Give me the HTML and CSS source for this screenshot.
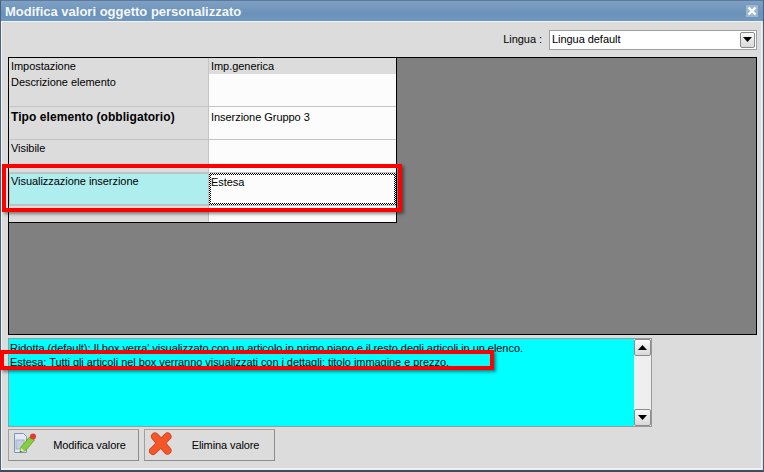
FILE: index.html
```html
<!DOCTYPE html>
<html lang="it">
<head>
<meta charset="utf-8">
<title>Modifica valori oggetto personalizzato</title>
<link rel="stylesheet" href="styles.css">
</head>
<body>
<div class="window">
  <header class="titlebar">
    <span class="title">Modifica valori oggetto personalizzato</span>
    <span class="close"><svg width="10" height="10" viewBox="0 0 10 10"><path d="M1.500 1.500l7 7M8.500 1.500l-7 7" stroke="#fff" stroke-width="2.400" fill="none"/></svg></span>
  </header>
  <main class="content">
    <div class="langbar">
      <span class="langlabel">Lingua :</span>
      <div class="select">
        <span>Lingua default</span>
        <span class="selbtn"><svg width="9" height="5" viewBox="0 0 9 5"><path d="M0 0h9L4.500 5z" fill="#000"/></svg></span>
      </div>
    </div>
    <section class="gridarea">
      <div class="table">
        <div class="row head"><div class="c1">Impostazione</div><div class="c2">Imp.generica</div></div>
        <div class="row r"><div class="c1">Descrizione elemento</div><div class="c2"></div></div>
        <div class="row r"><div class="c1 strong">Tipo elemento (obbligatorio)</div><div class="c2">Inserzione Gruppo 3</div></div>
        <div class="row r"><div class="c1">Visibile</div><div class="c2"></div></div>
        <div class="row r sel"><div class="c1">Visualizzazione inserzione</div><div class="c2">Estesa</div></div>
        <div class="row last"><div class="c1"></div><div class="c2"></div></div>
      </div>
    </section>
    <section class="info">
      <div class="infotext">
        <p>Ridotta (default): Il box verra' visualizzato con un articolo in primo piano e il resto degli articoli in un elenco.</p>
        <p>Estesa: Tutti gli articoli nel box verranno visualizzati con i dettagli: titolo immagine e prezzo.</p>
      </div>
      <div class="scroll">
        <span class="sbtn"><svg width="9" height="5" viewBox="0 0 9 5"><path d="M0 5h9L4.500 0z" fill="#000"/></svg></span>
        <span class="strack"></span>
        <span class="sbtn"><svg width="9" height="5" viewBox="0 0 9 5"><path d="M0 0h9L4.500 5z" fill="#000"/></svg></span>
      </div>
    </section>
    <div class="buttons">
      <button class="btn"><span class="ic">
        <svg width="24" height="26" viewBox="0 0 24 26">
          <path d="M1.500 1.500h9l3 3v16h-12z" fill="#e4eaf4" stroke="#8094b8"/>
          <rect x="3" y="8" width="8" height="9" fill="#c4cfe0" stroke="#9fb0c8"/>
          <path d="M7 20.500l1-5.500L17 4.500l4.500 3.500L12.500 18.500z" fill="#86cf3e" stroke="#5a9a28" stroke-width=".8"/>
          <path d="M7 20.500l1-4.500 3.500 3z" fill="#f0e4c0"/>
          <path d="M7 20.500l.5-2 1.500 1.300z" fill="#3a5a20"/>
          <circle cx="20" cy="4.500" r="3" fill="#e23a34"/>
        </svg></span><span class="lbl">Modifica valore</span></button>
      <button class="btn"><span class="ic">
        <svg width="24" height="26" viewBox="0 0 24 26">
          <path d="M6 4.500L18.500 18.500M18.500 4.500L4 19" stroke="#c8411c" stroke-width="8" stroke-linecap="round" fill="none"/>
          <path d="M6 4.500L18.500 18.500M18.500 4.500L4 19" stroke="#f4562a" stroke-width="6.500" stroke-linecap="round" fill="none"/>
        </svg></span><span class="lbl">Elimina valore</span></button>
    </div>
  </main>
  <div class="mark mark1"></div>
  <div class="mark mark2"></div>
</div>
</body>
</html>
```
FILE: styles.css
```css
* { box-sizing: border-box; }
html, body { margin: 0; padding: 0; }
body { width: 764px; height: 472px; overflow: hidden; background: #dcdcdc; font-family: "Liberation Sans", sans-serif; font-size: 11px; letter-spacing: -0.05px; color: #000; }
.window { position: relative; width: 764px; height: 472px; display: flex; flex-direction: column; background: #dcdcdc; border: 1px solid #4c6178; border-top-color: #5d7a9c; border-bottom: 2px solid #3e4c5c; }
.titlebar { height: 20px; flex: none; display: flex; align-items: center; justify-content: space-between; padding: 0 4px 0 4px; background: linear-gradient(#7fa0c4, #6c92b9 60%, #7097bf); color: #f4f8fc; }
.title { font-weight: bold; font-size: 13px; letter-spacing: 0; }
.close { width: 12px; height: 12px; display: flex; align-items: center; justify-content: center; background: #9db6d2; margin-right: 1px; }
.content { flex: 1; display: flex; flex-direction: column; padding: 0 4px 0 6px; border-left: 1px solid #f2f2f2; border-right: 1px solid #f2f2f2; border-top: 1px solid #f2f2f2; border-bottom: 2px solid #f0f0f0; margin: 0 1px 0 0; }
.langbar { height: 35px; flex: none; display: flex; align-items: center; justify-content: flex-end; gap: 7px; padding: 0 0 0 0; }
.langlabel, .select span:first-child { position: relative; top: -1px; }
.select { width: 208px; height: 20px; display: flex; align-items: center; justify-content: space-between; background: #fff; border: 1px solid #a0a0a0; padding: 0 1px 0 2px; }
.selbtn, .sbtn { display: flex; align-items: center; justify-content: center; background: linear-gradient(#fafafa, #d8d8d8); border: 1px solid #8a8a8a; border-radius: 2px; }
.selbtn { width: 15px; height: 16px; }
.gridarea { height: 278px; flex: none; background: #808080; border: 1px solid #000; }
.table { width: 388px; border-right: 1px solid #000; border-bottom: 1px solid #000; background: #fff; }
.row { display: grid; grid-template-columns: 200px 1fr; }
.c1 { background: #dcdcdc; padding: 1px 2px; border-right: 1px solid #c4c4c4; line-height: 14px; }
.c2 { padding: 1px 2px; background: #fcfcfc; line-height: 14px; }
.head { height: 16px; border-bottom: 1px solid #000; }
.head .c2 { background: #dcdcdc; }
.r { height: 33px; border-bottom: 1px solid #c4c4c4; }
.r .c1 { line-height: 16px; padding-top: 0; }
.r .c2 { line-height: 16px; padding-top: 0; }
.r .strong { font-weight: bold; font-size: 12px; letter-spacing: 0.07px; padding-top: 2px; }
.r .strong + .c2 { padding-top: 2px; }
.sel .c1 { background: #aeeeee; border: 1px solid #c0c0c0; padding-top: 0; padding-left: 1px; }
.r.sel .c1 { line-height: 14px; }
.r.sel .c2 { border: 2px solid transparent; background: linear-gradient(#fcfcfc, #fcfcfc) padding-box, repeating-conic-gradient(#000 0 25%, #fff 0 50%) 0 0 / 2px 2px border-box; padding: 0; line-height: 14px; }
.last { height: 16px; }
.info { height: 89px; margin-top: 3px; flex: none; width: 644px; display: flex; background: #00ffff; border: 1px solid #9a9a9a; }
.infotext { flex: 1; padding: 2px 1px; line-height: 14px; overflow: hidden; }
.infotext p { margin: 0; }
.scroll { width: 17px; display: flex; flex-direction: column; background: #efefef; }
.sbtn { height: 17px; width: 17px; }
.strack { flex: 1; }
.buttons { display: flex; gap: 5px; margin-top: 2px; }
.btn { width: 131px; height: 32px; display: flex; align-items: center; padding: 0 0 0 4px; background: #dcdcdc; border: 1px solid #a0a0a0; border-right-color: #8c8c8c; border-bottom-color: #8c8c8c; font: inherit; letter-spacing: -0.1px; color: #000; }
.ic { width: 24px; height: 26px; flex: none; display: block; }
.lbl { flex: 1; text-align: center; padding-left: 4px; }
.mark { position: absolute; border: 4px solid #fe0000; box-shadow: 2px 2px 3px rgba(0,0,0,.45); }
.mark1 { left: 1px; top: 163px; width: 400px; height: 48px; }
.mark2 { left: -1px; top: 349px; width: 494px; height: 20px; }
```
